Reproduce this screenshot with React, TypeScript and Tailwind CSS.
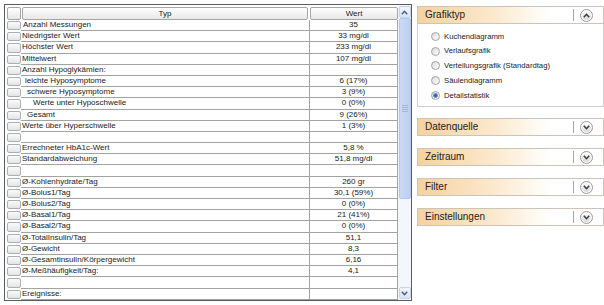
import React from "react";

type Row = { t: string; v: string; ind?: string };

const rows: Row[] = [
  { t: "Anzahl Messungen", v: "35", ind: "pl-[2px]" },
  { t: "Niedrigster Wert", v: "33 mg/dl" },
  { t: "Höchster Wert", v: "233 mg/dl" },
  { t: "Mittelwert", v: "107 mg/dl" },
  { t: "Anzahl Hypoglykämien:", v: "" },
  { t: "leichte Hyposymptome", v: "6 (17%)", ind: "pl-[4px]" },
  { t: "schwere Hyposymptome", v: "3 (9%)", ind: "pl-[6px]" },
  { t: "Werte unter Hyposchwelle", v: "0 (0%)", ind: "pl-[12px]" },
  { t: "Gesamt", v: "9 (26%)", ind: "pl-[6px]" },
  { t: "Werte über Hyperschwelle", v: "1 (3%)" },
  { t: "", v: "" },
  { t: "Errechneter HbA1c-Wert", v: "5,8 %" },
  { t: "Standardabweichung", v: "51,8 mg/dl" },
  { t: "", v: "" },
  { t: "Ø-Kohlenhydrate/Tag", v: "260 gr" },
  { t: "Ø-Bolus1/Tag", v: "30,1 (59%)" },
  { t: "Ø-Bolus2/Tag", v: "0 (0%)" },
  { t: "Ø-Basal1/Tag", v: "21 (41%)" },
  { t: "Ø-Basal2/Tag", v: "0 (0%)" },
  { t: "Ø-TotalInsulin/Tag", v: "51,1" },
  { t: "Ø-Gewicht", v: "8,3" },
  { t: "Ø-Gesamtinsulin/Körpergewicht", v: "6,16" },
  { t: "Ø-Meßhäufigkeit/Tag:", v: "4,1" },
  { t: "", v: "" },
  { t: "Ereignisse:", v: "" },
];

const radios = [
  "Kuchendiagramm",
  "Verlaufsgrafik",
  "Verteilungsgrafik (Standardtag)",
  "Säulendiagramm",
  "Detailstatistik",
];

function Toggle({ open }: { open: boolean }) {
  return (
    <div className="w-[13px] h-[13px] rounded-full border border-[#9c9c9c] bg-gradient-to-b from-white to-[#d6d6d6] flex items-center justify-center shadow-[inset_0_0_0_1px_#ffffff]">
      <svg width="7" height="5" viewBox="0 0 7 5">
        {open ? (
          <polyline points="0.8,4.2 3.5,1.3 6.2,4.2" fill="none" stroke="#3a3a3a" strokeWidth="1.5" />
        ) : (
          <polyline points="0.8,0.8 3.5,3.7 6.2,0.8" fill="none" stroke="#3a3a3a" strokeWidth="1.5" />
        )}
      </svg>
    </div>
  );
}

function PanelHeader({ title, open }: { title: string; open: boolean }) {
  return (
    <div className="h-[18px] border border-[#cbc4b8] bg-gradient-to-r from-[#f6d29e] via-[#fbe8cc] via-[40%] to-white to-[72%] flex items-center pl-[7px] pr-[10px]">
      <span className="flex-1 text-[10px] leading-none text-[#222]">{title}</span>
      <div className="w-[2px] h-[12px] border-l border-[#a8a8a8] border-r border-r-white mr-[5px]"></div>
      <Toggle open={open} />
    </div>
  );
}

function Radio({ checked }: { checked: boolean }) {
  return (
    <div className="w-[9px] h-[9px] rounded-full border border-[#a3a3a3] bg-gradient-to-br from-[#d9d9d9] to-white flex items-center justify-center">
      {checked && <div className="w-[5px] h-[5px] rounded-full bg-[#2f5fb3] border border-[#6d93d6]"></div>}
    </div>
  );
}

function ScrollArrow({ up }: { up: boolean }) {
  return (
    <div className="h-[12px] w-[12px] border border-[#c6d3ea] rounded-[2px] bg-gradient-to-b from-[#f4f7fd] to-[#d8e3f6] flex items-center justify-center">
      <svg width="7" height="5" viewBox="0 0 7 5">
        {up ? (
          <polyline points="0.8,4.2 3.5,1.3 6.2,4.2" fill="none" stroke="#4a5f86" strokeWidth="1.5" />
        ) : (
          <polyline points="0.8,0.8 3.5,3.7 6.2,0.8" fill="none" stroke="#4a5f86" strokeWidth="1.5" />
        )}
      </svg>
    </div>
  );
}

export default function App() {
  return (
    <div className="w-[604px] h-[305px] bg-white flex items-start overflow-hidden font-['Liberation_Sans',Arial,sans-serif] text-[#1a1a1a]">
      {/* Left: table */}
      <div className="ml-[4px] mt-[4px] w-[408px] h-[297px] border border-[#5c5c5c] flex">
        <div className="w-[393px] flex flex-col">
          {/* header */}
          <div className="h-[15px] flex items-start pt-[2px]">
            <div className="ml-[2px] w-[14px] h-[13px] rounded-[2px] border border-[#a5a5a5] bg-gradient-to-b from-white to-[#e6e6e6]"></div>
            <div className="ml-[1px] w-[286px] h-[13px] rounded-[2px] border border-[#a5a5a5] bg-gradient-to-b from-white to-[#e8e8e8] flex items-center justify-center text-[8px] leading-none">
              Typ
            </div>
            <div className="ml-[2px] w-[88px] h-[13px] rounded-[2px] border border-[#a5a5a5] bg-gradient-to-b from-white to-[#e8e8e8] flex items-center justify-center text-[8px] leading-none">
              Wert
            </div>
          </div>
          {/* rows */}
          {rows.map((r, i) => (
            <div key={i} className="h-[11.2px] flex shrink-0">
              <div className="w-[16px] h-full pl-[2px] py-[1px]">
                <div className="w-[14px] h-full rounded-[2px] border border-[#a9afb8] bg-gradient-to-b from-[#fbfbfb] to-[#e4e4e4]"></div>
              </div>
              <div className={`w-[289px] h-full border-b border-r border-[#a3a3a3] flex items-center text-[8px] leading-none whitespace-nowrap ${r.ind ?? "pl-[1px]"}`}>
                {r.t}
              </div>
              <div className="w-[88px] h-full border-b border-r border-[#a3a3a3] flex items-center justify-center text-[8px] leading-none whitespace-nowrap">
                {r.v}
              </div>
            </div>
          ))}
        </div>
        {/* scrollbar */}
        <div className="w-[13px] h-full flex flex-col items-center pt-[1px] pb-[1px] bg-[#f3f6fc]">
          <ScrollArrow up />
          <div className="flex-1 w-[12px] flex flex-col">
            <div className="h-[181px] w-[12px] rounded-[2px] border border-[#b3c6ea] bg-gradient-to-r from-[#cbdaf6] to-[#bccff2] flex flex-col items-center justify-center gap-[1px]">
              <div className="w-[6px] h-px bg-[#9fb6e0]"></div>
              <div className="w-[6px] h-px bg-[#9fb6e0]"></div>
              <div className="w-[6px] h-px bg-[#9fb6e0]"></div>
              <div className="w-[6px] h-px bg-[#9fb6e0]"></div>
            </div>
          </div>
          <ScrollArrow up={false} />
        </div>
      </div>

      {/* Right: panels */}
      <div className="ml-[5px] mt-[6px] w-[187px] flex flex-col">
        <PanelHeader title="Grafiktyp" open />
        <div className="h-[83px] border-x border-b border-[#cfcfcf] pt-[5px] pl-[13px]">
          {radios.map((r, i) => (
            <div key={r} className="h-[14.75px] flex items-center gap-[4px]">
              <Radio checked={i === 4} />
              <span className="text-[7.7px] leading-none text-[#222] whitespace-nowrap">{r}</span>
            </div>
          ))}
        </div>
        <div className="mt-[11px] flex flex-col gap-[12px]">
          <PanelHeader title="Datenquelle" open={false} />
          <PanelHeader title="Zeitraum" open={false} />
          <PanelHeader title="Filter" open={false} />
          <PanelHeader title="Einstellungen" open={false} />
        </div>
      </div>
    </div>
  );
}
